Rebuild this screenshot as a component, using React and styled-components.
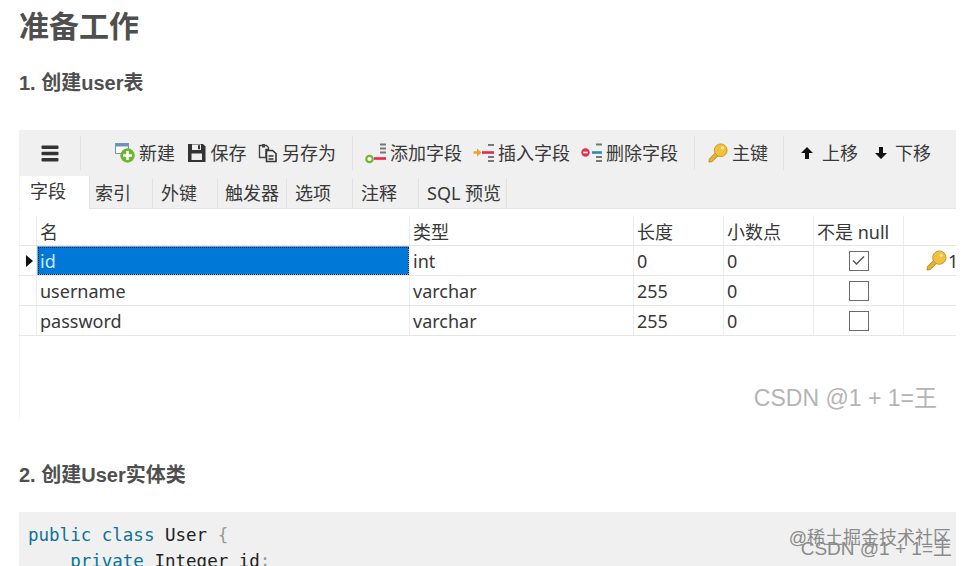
import React from 'react';
import styled, { createGlobalStyle } from 'styled-components';

const GlobalStyle = createGlobalStyle`
  html, body {
    margin: 0;
    padding: 0;
    background: #fff;
    overflow: hidden;
  }
`;

const CJK = `"Noto Sans", "Noto Sans CJK SC", sans-serif`;

const Page = styled.div`
  width: 968px;
  height: 566px;
  box-sizing: border-box;
  padding: 0 12px 0 19px;
  overflow: hidden;
  font-family: "Liberation Sans", "Noto Sans CJK SC", sans-serif;
  color: #4f4f4f;
`;

const Title = styled.h1`
  margin: 0;
  padding-top: 7px;
  height: 53px;
  box-sizing: border-box;
  font-size: 30px;
  line-height: 40px;
  font-weight: 700;
`;

const SubTitle = styled.h3`
  margin: ${(p) => p.$top}px 0 0;
  font-size: 20px;
  line-height: 28px;
  font-weight: 700;
`;

const Shot = styled.div`
  position: relative;
  margin-top: 33px;
  height: 290px;
  font-family: ${CJK};
  color: #383838;
  background: #fff;
  box-shadow: inset 1px 0 0 #f6f6f6;
`;

const Toolbar = styled.div`
  height: 48px;
  background: #f0f0f0;
  display: flex;
  align-items: center;
  font-size: 18px;
  padding-bottom: 2px;
  box-sizing: border-box;
`;

const MenuSlot = styled.div`
  width: 62px;
  height: 34px;
  display: flex;
  align-items: center;
  justify-content: center;
  border-right: 1px solid #e2e2e2;
  box-sizing: border-box;
`;

const Group = styled.div`
  display: flex;
  align-items: center;
  gap: ${(p) => p.$gap}px;
  height: 34px;
  box-sizing: border-box;
  padding: 0 ${(p) => p.$right}px 0 ${(p) => p.$left}px;
  border-right: ${(p) => (p.$last ? 'none' : '1px solid #e2e2e2')};
`;

const Tool = styled.div`
  display: flex;
  align-items: center;
  gap: ${(p) => p.$gap || 4}px;
  white-space: nowrap;
  line-height: 24px;
`;

const Tabs = styled.div`
  height: 31px;
  background: #f0f0f0;
  display: flex;
  align-items: flex-end;
  padding-left: 1px;
  border-bottom: 1px solid #e4e4e4;
  box-sizing: border-box;
  font-size: 18px;
`;

const Tab = styled.div`
  width: ${(p) => p.$w}px;
  height: ${(p) => (p.$active ? 33 : 30)}px;
  box-sizing: border-box;
  margin-bottom: ${(p) => (p.$active ? -1 : 0)}px;
  padding-left: ${(p) => p.$pad}px;
  line-height: 30px;
  white-space: nowrap;
  background: ${(p) => (p.$active ? '#fff' : '#f0f0f0')};
  border-right: 1px solid #e2e2e2;
`;

const Grid = styled.div`
  display: grid;
  grid-template-columns: 18px 373px 224px 90px 90px 90px 52px;
  font-size: 18px;
  padding-top: 7px;
`;

const Cell = styled.div`
  height: 30px;
  box-sizing: border-box;
  padding-left: 3px;
  white-space: nowrap;
  overflow: hidden;
  display: flex;
  align-items: center;
  border-right: 1px solid #ededed;
  border-bottom: 1px solid #e6e6e6;
  ${(p) => p.$selected && `
    background: #0078d7;
    color: #cfe6fb;
    outline: 1px dotted #222;
    outline-offset: -2px;
    box-shadow: inset 0 0 0 1px #5ab0f0;
  `}
  ${(p) => p.$center && 'justify-content: center; padding-left: 0;'}
  ${(p) => p.$edge && 'border-right: none; padding-left: 0;'}
`;

const Marker = styled(Cell)`
  padding-left: 7px;
`;

const Arrow = styled.div`
  width: 0;
  height: 0;
  border-top: 6px solid transparent;
  border-bottom: 6px solid transparent;
  border-left: 7px solid #111;
`;

const Check = styled.div`
  width: 20px;
  height: 20px;
  box-sizing: border-box;
  border: 1.5px solid #6b6b6b;
  display: flex;
  align-items: center;
  justify-content: center;
`;

const KeyValue = styled.div`
  display: flex;
  align-items: center;
  padding-left: 22px;
  gap: 1px;
`;

const Watermark = styled.div`
  position: absolute;
  right: ${(p) => p.$right}px;
  top: ${(p) => p.$top}px;
  font-family: "Liberation Sans", "Noto Sans CJK SC", sans-serif;
  font-size: ${(p) => p.$size}px;
  line-height: 26px;
  color: ${(p) => p.$color};
  white-space: nowrap;
  pointer-events: none;
`;

const Code = styled.pre`
  position: relative;
  margin: 23px 0 0;
  height: 54px;
  padding: 10px 9px;
  box-sizing: border-box;
  background: #f0f0f0;
  font-family: "DejaVu Sans Mono", monospace;
  font-size: 17.5px;
  line-height: 26px;
  color: #222;
  overflow: hidden;
`;

const Keyword = styled.span`
  color: #0a7396;
`;

const Punct = styled.span`
  color: #999;
`;

const MenuIcon = () => (
  <svg width="18" height="17" viewBox="0 0 18 17">
    <rect x="0.5" y="0.5" width="17" height="3.6" rx="1" fill="#333" />
    <rect x="0.5" y="6.7" width="17" height="3.6" rx="1" fill="#333" />
    <rect x="0.5" y="13" width="17" height="3.6" rx="1" fill="#333" />
  </svg>
);

const NewIcon = () => (
  <svg width="20" height="20" viewBox="0 0 20 20">
    <rect x="0.5" y="0.5" width="13" height="10" fill="#fff" stroke="#7d93ad" />
    <rect x="0.5" y="0.5" width="13" height="3" fill="#6f8fc0" />
    <circle cx="12.5" cy="12.5" r="7.2" fill="#6cb52d" />
    <path d="M12.5 8v9M8 12.5h9" stroke="#fff" strokeWidth="2.6" />
  </svg>
);

const SaveIcon = () => (
  <svg width="20" height="20" viewBox="0 0 20 20">
    <path d="M1 1h15l2.5 2.5V19H1z" fill="#333" />
    <rect x="5" y="1.5" width="9" height="5.5" fill="#f0f0f0" />
    <rect x="11" y="2.2" width="2" height="4" fill="#333" />
    <rect x="4.5" y="10.5" width="10.5" height="6.5" fill="#f0f0f0" />
  </svg>
);

const SaveAsIcon = () => (
  <svg width="20" height="20" viewBox="0 0 20 20">
    <path d="M1.5 2.5h7l2 2v2H8v8H1.5z" fill="#f0f0f0" stroke="#444" strokeWidth="1.4" />
    <rect x="4" y="1" width="3" height="3.5" fill="#444" />
    <path d="M8.5 7.5h6l3.5 3v8H8.5z" fill="#f0f0f0" stroke="#333" strokeWidth="1.6" />
    <path d="M10.5 13h5M10.5 16h5" stroke="#333" strokeWidth="1.4" />
  </svg>
);

const FieldIcon = ({ kind }) => (
  <svg width="21" height="22" viewBox="0 0 21 22">
    {kind === 'add' && (
      <>
        <path d="M15 2.5h6M15 6.5h6M15 10.5h6" stroke="#777" strokeWidth="2" />
        <path d="M9 16.5h12" stroke="#e8274b" strokeWidth="2.6" />
        <circle cx="4.5" cy="17" r="3.2" fill="#fff" stroke="#72b52f" strokeWidth="2.2" />
      </>
    )}
    {kind === 'insert' && (
      <>
        <path d="M15 3h6M15 15h6M15 19h6" stroke="#777" strokeWidth="2" />
        <path d="M9 10.5h12" stroke="#e8274b" strokeWidth="2.6" />
        <path d="M0.5 10.5h5" stroke="#f0a030" strokeWidth="2.4" />
        <path d="M4 6.5l4.5 4-4.5 4z" fill="#f0a030" />
      </>
    )}
    {kind === 'remove' && (
      <>
        <path d="M15 2.5h6M15 15h6M15 19h6" stroke="#777" strokeWidth="2" />
        <path d="M11 10.5h10" stroke="#2a8fb0" strokeWidth="2.6" />
        <circle cx="4.5" cy="10.5" r="4.2" fill="#e0334f" />
        <path d="M2.3 10.5h4.4" stroke="#fff" strokeWidth="1.6" />
      </>
    )}
  </svg>
);

const KeyIcon = ({ size }) => (
  <svg width={size} height={size} viewBox="0 0 22 22">
    <path d="M9.5 9.5 1.5 17.5 1 21l3.5-.5 8-8" fill="#e8b030" stroke="#c08a18" strokeWidth="1" />
    <circle cx="14" cy="8" r="7" fill="#f2c040" stroke="#c9941e" strokeWidth="1" />
    <circle cx="16" cy="5.5" r="1.6" fill="#fbe6a0" />
  </svg>
);

const MoveIcon = ({ down }) => (
  <svg width="14" height="14" viewBox="0 0 14 14">
    <path
      d={down ? 'M5 1h4v6h4l-6 6-6-6h4z' : 'M7 1l6 6H9v6H5V7H1z'}
      fill="#111"
    />
  </svg>
);

const tabs = [
  { label: '字段', w: 70, pad: 10, active: true },
  { label: '索引', w: 63, pad: 5 },
  { label: '外键', w: 65, pad: 8 },
  { label: '触发器', w: 69, pad: 7 },
  { label: '选项', w: 66, pad: 8 },
  { label: '注释', w: 66, pad: 8 },
  { label: 'SQL 预览', w: 88, pad: 8 },
];

const rows = [
  { name: 'id', type: 'int', len: '0', checked: true, selected: true },
  { name: 'username', type: 'varchar', len: '255' },
  { name: 'password', type: 'varchar', len: '255' },
];

export default function App() {
  return (
    <Page>
      <GlobalStyle />
      <Title>准备工作</Title>
      <SubTitle $top={16}>1. 创建user表</SubTitle>

      <Shot>
        <Toolbar>
          <MenuSlot>
            <MenuIcon />
          </MenuSlot>
          <Group $left={34} $right={16} $gap={11.5}>
            <Tool><NewIcon />新建</Tool>
            <Tool><SaveIcon />保存</Tool>
            <Tool><SaveAsIcon />另存为</Tool>
          </Group>
          <Group $left={12} $right={16} $gap={11}>
            <Tool><FieldIcon kind="add" />添加字段</Tool>
            <Tool><FieldIcon kind="insert" />插入字段</Tool>
            <Tool><FieldIcon kind="remove" />删除字段</Tool>
          </Group>
          <Group $left={13} $right={15} $gap={0}>
            <Tool><KeyIcon size={20} />主键</Tool>
          </Group>
          <Group $left={16} $gap={16} $right={0} $last>
            <Tool $gap={8}><MoveIcon />上移</Tool>
            <Tool $gap={7}><MoveIcon down />下移</Tool>
          </Group>
        </Toolbar>

        <Tabs>
          {tabs.map((t) => (
            <Tab key={t.label} $w={t.w} $pad={t.pad} $active={t.active}>{t.label}</Tab>
          ))}
        </Tabs>

        <Grid>
          <Cell />
          <Cell>名</Cell>
          <Cell>类型</Cell>
          <Cell>长度</Cell>
          <Cell>小数点</Cell>
          <Cell>不是 null</Cell>
          <Cell $edge />
          {rows.map((r) => (
            <React.Fragment key={r.name}>
              <Marker>{r.selected && <Arrow />}</Marker>
              <Cell $selected={r.selected}>{r.name}</Cell>
              <Cell>{r.type}</Cell>
              <Cell>{r.len}</Cell>
              <Cell>0</Cell>
              <Cell $center>
                <Check>
                  {r.checked && (
                    <svg width="15" height="13" viewBox="0 0 15 13">
                      <path d="M2 6.5l3.5 3.5L13 2.5" fill="none" stroke="#555" strokeWidth="1.5" />
                    </svg>
                  )}
                </Check>
              </Cell>
              <Cell $edge>
                {r.checked && <KeyValue><KeyIcon size={21} />1</KeyValue>}
              </Cell>
            </React.Fragment>
          ))}
        </Grid>

        <Watermark $right={19} $top={255} $size={23} $color="#b4b4b4">CSDN @1 + 1=王</Watermark>
      </Shot>

      <SubTitle $top={41}>2. 创建User实体类</SubTitle>

      <Code>
        <Keyword>public</Keyword> <Keyword>class</Keyword> User <Punct>{'{'}</Punct>{'\n'}
        {'    '}<Keyword>private</Keyword> Integer id<Punct>;</Punct>
        <Watermark $right={5} $top={13} $size={18} $color="#8a8a8a">@稀土掘金技术社区</Watermark>
        <Watermark $right={4} $top={24} $size={19} $color="#8a8a8a">CSDN @1 + 1=王</Watermark>
      </Code>
    </Page>
  );
}
